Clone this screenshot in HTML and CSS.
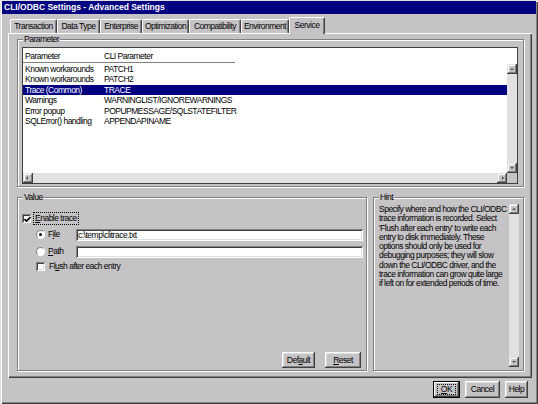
FILE: index.html
```html
<!DOCTYPE html>
<html>
<head>
<meta charset="utf-8">
<title>CLI/ODBC Settings - Advanced Settings</title>
<link rel="stylesheet" href="styles.css">
</head>
<body>
<div class="win">
  <div class="title">CLI/ODBC Settings - Advanced Settings</div>
  <div class="tabs">
    <div class="tab t1">Transaction</div>
    <div class="tab t2">Data Type</div>
    <div class="tab t3">Enterprise</div>
    <div class="tab t4">Optimization</div>
    <div class="tab t5">Compatibility</div>
    <div class="tab t6">Environment</div>
    <div class="tab t7 active">Service</div>
  </div>
  <div class="panel">
    <div class="group g-param">
      <span class="glabel">Parameter</span>
      <div class="list">
        <div class="lhead"><div class="lhead-in"><span class="c1">Parameter</span><span class="c2">CLI Parameter</span></div></div>
        <div class="lmid">
          <div class="rows">
            <div class="row"><span class="c1">Known workarounds</span><span class="c2">PATCH1</span></div>
            <div class="row"><span class="c1">Known workarounds</span><span class="c2">PATCH2</span></div>
            <div class="row sel"><span class="c1">Trace (Common)</span><span class="c2">TRACE</span></div>
            <div class="row"><span class="c1">Warnings</span><span class="c2">WARNINGLIST/IGNOREWARNINGS</span></div>
            <div class="row"><span class="c1">Error popup</span><span class="c2">POPUPMESSAGE/SQLSTATEFILTER</span></div>
            <div class="row"><span class="c1">SQLError() handling</span><span class="c2">APPENDAPINAME</span></div>
          </div>
          <div class="vscroll">
            <div class="sbtn up"></div>
            <div class="track"></div>
            <div class="sbtn down"></div>
          </div>
        </div>
        <div class="lbot">
          <div class="hscroll">
            <div class="sbtn left"></div>
            <div class="track"></div>
            <div class="sbtn right"></div>
          </div>
          <div class="corner"></div>
        </div>
      </div>
    </div>
    <div class="lower">
      <div class="group g-value">
        <span class="glabel">Value</span>
        <div class="vrow r1">
          <span class="chk checked"><svg width="7" height="7" viewBox="0 0 7 7"><path d="M0.5 3 L2.5 5 L6.5 1" fill="none" stroke="#000" stroke-width="1.6"/></svg></span>
          <span class="lbl focus"><u>E</u>nable trace</span>
        </div>
        <div class="vrow r2">
          <span class="radio on"></span>
          <span class="lbl rl">F<u>i</u>le</span>
          <div class="edit">c:\temp\clitrace.txt</div>
        </div>
        <div class="vrow r3">
          <span class="radio"></span>
          <span class="lbl rl"><u>P</u>ath</span>
          <div class="edit"></div>
        </div>
        <div class="vrow r4">
          <span class="chk"></span>
          <span class="lbl">Fl<u>u</u>sh after each entry</span>
        </div>
        <div class="vbtns">
          <div class="btn b-default">Def<u>a</u>ult</div>
          <div class="btn b-reset"><u>R</u>eset</div>
        </div>
      </div>
      <div class="group g-hint">
        <span class="glabel">Hint</span>
        <div class="hint">
          <div class="hint-text">Specify where and how the CLI/ODBC<br>trace information is recorded. Select<br>'Flush after each entry' to write each<br>entry to disk immediately. These<br>options should only be used for<br>debugging purposes; they will slow<br>down the CLI/ODBC driver, and the<br>trace information can grow quite large<br>if left on for extended periods of time.</div>
          <div class="vscroll hs">
            <div class="sbtn up"></div>
            <div class="track"></div>
            <div class="sbtn down"></div>
          </div>
        </div>
      </div>
    </div>
  </div>
  <div class="footer">
    <div class="btn b-ok"><span class="focus"><u>O</u>K</span></div>
    <div class="btn b-cancel">Cancel</div>
    <div class="btn b-help">Help</div>
  </div>
</div>
</body>
</html>
```
FILE: styles.css
```css
* { box-sizing: border-box; margin: 0; padding: 0; }
html, body { margin: 0; }
body {
  width: 538px;
  height: 404px;
  overflow: hidden;
  background: #c6c3c6;
  color: #000;
  font-family: "Liberation Sans", Arial, sans-serif;
  font-size: 8.5px;
  letter-spacing: -0.5px;
}
.win {
  width: 538px;
  height: 404px;
  padding: 1px 2px 0 2px;
  background: #c6c3c6;
  box-shadow: inset 1px 1px #dfdfdf, inset 2px 2px #fff, inset -1px -1px #404040, inset -2px -2px #808080;
  display: flex;
  flex-direction: column;
}
.title {
  height: 13px;
  background: #000080;
  color: #fff;
  font-weight: bold;
  font-size: 8.5px;
  letter-spacing: 0;
  line-height: 13px;
  padding-left: 2px;
  white-space: nowrap;
}
.tabs {
  height: 19px;
  display: flex;
  align-items: flex-end;
  padding-left: 8px;
  position: relative;
  z-index: 2;
}
.tab {
  height: 14px;
  line-height: 12px;
  text-align: center;
  white-space: nowrap;
  border-top: 1px solid #fff;
  border-left: 1px solid #fff;
  border-right: 1px solid #404040;
  border-radius: 2px 2px 0 0;
  box-shadow: inset -1px 0 #808080;
}
.t1 { width: 47px; }
.t2 { width: 43px; }
.t3 { width: 42px; }
.t4 { width: 47px; }
.t5 { width: 52px; }
.t6 { width: 48px; }
.t7 { width: 36px; }
.tab.active {
  height: 17px;
  margin-bottom: -1px;
  line-height: 14px;
  background: #c6c3c6;
}
.panel {
  margin-left: 6px;
  width: 524px;
  height: 345px;
  padding: 6px 8px 7px 9px;
  box-shadow: inset 1px 1px #fff, inset -1px -1px #404040, inset -2px -2px #808080;
  display: flex;
  flex-direction: column;
  gap: 10px;
}
.group {
  position: relative;
  border: 1px solid #808080;
  box-shadow: inset 1px 1px #fff, 1px 1px #fff;
}
.glabel {
  position: absolute;
  left: 5px;
  top: -6px;
  padding: 0 1px;
  line-height: 10px;
  background: #c6c3c6;
}
.g-param {
  height: 148px;
  padding: 7px 5px 2px 4px;
  display: flex;
}
.list {
  flex: 1;
  background: #fff;
  border: 1px solid #404040;
  display: flex;
  flex-direction: column;
}
.lhead {
  height: 16px;
  flex: none;
}
.lhead-in {
  width: 212px;
  height: 15px;
  border-bottom: 1px solid #808080;
  display: flex;
  align-items: center;
  padding-top: 1px;
}
.c1 { width: 81px; padding-left: 2px; flex: none; }
.c2 { flex: none; }
.lmid {
  flex: 1;
  display: flex;
  min-height: 0;
}
.rows { flex: 1; }
.row {
  height: 10.4px;
  line-height: 10.4px;
  display: flex;
  white-space: nowrap;
}
.row.sel { background: #000080; color: #fff; }
.vscroll {
  width: 10px;
  flex: none;
  display: flex;
  flex-direction: column;
}
.track { flex: 1; background: #e2e0e2; }
.sbtn {
  width: 10px;
  height: 10px;
  flex: none;
  background: #c6c3c6;
  box-shadow: inset -1px -1px #404040, inset 1px 1px #dfdfdf, inset -2px -2px #808080, inset 2px 2px #fff;
  position: relative;
}
.sbtn::after {
  content: "";
  position: absolute;
  width: 0;
  height: 0;
  border: 2px solid transparent;
}
.sbtn.up::after { left: 3px; top: 2px; border-bottom: 2px solid #505050; }
.sbtn.down::after { left: 3px; top: 4px; border-top: 2px solid #505050; }
.sbtn.left::after { left: 1px; top: 3px; border-right: 2px solid #505050; }
.sbtn.right::after { left: 5px; top: 3px; border-left: 2px solid #505050; }
.lbot {
  height: 10px;
  flex: none;
  display: flex;
}
.hscroll { flex: 1; display: flex; }
.hscroll .track { height: 10px; }
.corner { width: 10px; background: #c6c3c6; }
.lower {
  height: 174px;
  display: flex;
  gap: 6px;
}
.g-value {
  width: 350px;
  padding: 14px 3px 2px 4px;
  display: flex;
  flex-direction: column;
}
.vrow {
  height: 13px;
  display: flex;
  align-items: center;
  white-space: nowrap;
}
.r2 { margin-top: 3px; padding-left: 14px; }
.r3 { margin-top: 4px; padding-left: 14px; }
.r4 { margin-top: 2px; padding-left: 14px; }
.chk {
  width: 9px;
  height: 9px;
  flex: none;
  background: #fff;
  box-shadow: inset 1px 1px #808080, inset -1px -1px #fff, inset 2px 2px #404040, inset -2px -2px #dfdfdf;
  display: flex;
  align-items: center;
  justify-content: center;
  padding: 1px 0 0 1px;
}
.chk svg { display: block; }
.lbl { margin-left: 2px; padding: 0 1px; line-height: 11px; border: 1px solid transparent; }
.lbl.focus { border: 1px dotted #000; }
.radio {
  width: 9px;
  height: 9px;
  flex: none;
  border-radius: 50%;
  background: #fff;
  border: 1px solid;
  border-color: #808080 #fff #fff #808080;
  position: relative;
}
.radio.on::after {
  content: "";
  position: absolute;
  left: 2px;
  top: 2px;
  width: 3px;
  height: 3px;
  border-radius: 50%;
  background: #000;
}
.rl { width: 28px; margin-left: 1px; }
.edit {
  width: 287px;
  height: 12px;
  margin-left: auto;
  background: #fff;
  box-shadow: inset 1px 1px #808080, inset -1px -1px #fff, inset 2px 2px #404040, inset -2px -2px #dfdfdf;
  padding: 0 2px;
  line-height: 12px;
}
.vbtns {
  margin-top: auto;
  display: flex;
  justify-content: flex-end;
  gap: 10px;
  padding-right: 2px;
}
.btn {
  height: 17px;
  line-height: 17px;
  text-align: center;
  background: #c6c3c6;
  box-shadow: inset -1px -1px #404040, inset 1px 1px #fff, inset -2px -2px #808080, inset 2px 2px #dfdfdf;
  white-space: nowrap;
}
.b-default { width: 33px; height: 16px; line-height: 16px; }
.b-reset { width: 36px; height: 16px; line-height: 16px; }
.g-hint {
  flex: 1;
  padding: 6px 4px 3px 4px;
  display: flex;
}
.hint {
  flex: 1;
  display: flex;
}
.hint-text {
  flex: 1;
  padding: 1px 0 0 1px;
  line-height: 9.3px;
  white-space: nowrap;
  overflow: hidden;
}
.hs { width: 10px; }
.footer {
  height: 26px;
  display: flex;
  justify-content: flex-end;
  gap: 5px;
  padding: 3px 8px 0 0;
}
.b-ok {
  width: 27px;
  border: 1px solid #000;
  line-height: 15px;
  box-shadow: inset -1px -1px #404040, inset 1px 1px #fff, inset -2px -2px #808080;
  display: flex;
  align-items: center;
  justify-content: center;
}
.b-ok .focus { border: 1px dotted #000; padding: 0 3px; line-height: 9px; }
.b-cancel { width: 35px; }
.b-help { width: 23px; }
```
